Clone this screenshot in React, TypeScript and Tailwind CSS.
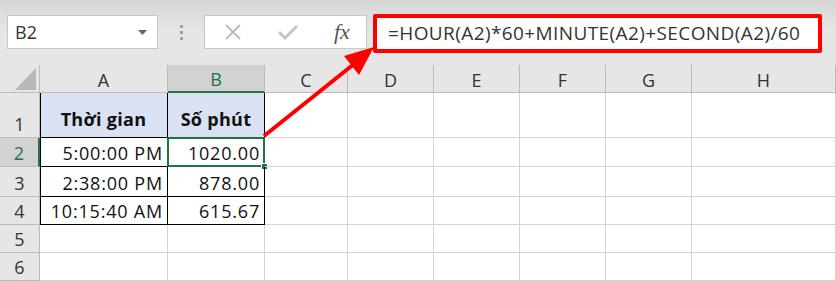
import React from "react";

const cols = [
  { key: "A", w: "w-[128px]" },
  { key: "B", w: "w-[97px]" },
  { key: "C", w: "w-[83px]" },
  { key: "D", w: "w-[86px]" },
  { key: "E", w: "w-[86px]" },
  { key: "F", w: "w-[86px]" },
  { key: "G", w: "w-[86px]" },
  { key: "H", w: "w-[144px]" },
];

const rowHeights = ["h-[45px]", "h-[29px]", "h-[30px]", "h-[28px]", "h-[28px]", "h-[28px]"];

const data: Record<string, string> = {
  A1: "Thời gian",
  B1: "Số phút",
  A2: "5:00:00 PM",
  B2: "1020.00",
  A3: "2:38:00 PM",
  B3: "878.00",
  A4: "10:15:40 AM",
  B4: "615.67",
};

function Cell({ col, row, w }: { col: string; row: number; w: string }) {
  const id = col + row;
  const inTable = (col === "A" || col === "B") && row <= 4;
  const header = inTable && row === 1;
  const text = data[id];
  let cls = `${w} shrink-0 h-full relative flex items-end box-border border-r border-b `;
  if (inTable) {
    cls += "border-black ";
    if (col === "A") cls += "shadow-[inset_1px_0_0_#000] ";
  } else {
    cls += "border-[#d4d4d4] ";
  }
  if (header) cls += "bg-[#d9e1f2] justify-center font-bold pb-[7px] ";
  else cls += "justify-end pr-[4px] pb-[2px] ";
  return (
    <div className={cls}>
      {text && (
        <span
          className={`text-[18px] leading-[22px] text-[#111] ${header ? "tracking-[0.3px]" : "tracking-[0.8px]"}`}
        >
          {text}
        </span>
      )}
      {id === "B2" && (
        <>
          <div className="absolute -left-[1px] -top-[1px] -right-[1px] -bottom-[1px] border-2 border-[#217346] pointer-events-none" />
          <div className="absolute -right-[4px] -bottom-[4px] w-[7px] h-[7px] bg-[#217346] border border-white" />
        </>
      )}
    </div>
  );
}

export default function App() {
  return (
    <div className="w-[836px] h-[281px] bg-[#e6e6e6] relative overflow-hidden font-['Open_Sans',sans-serif] text-[#333]">
      {/* Formula bar */}
      <div className="h-[65px] bg-gradient-to-b from-[#d6d6d6] via-[#e6e6e6] to-[#e6e6e6] flex items-start pt-[14px]">
        <div className="ml-[7px] mt-[1px] w-[151px] h-[34px] bg-white border border-[#c6c6c6] flex items-center justify-between pl-[7px] pr-[10px]">
          <span className="text-[18px] text-[#333]">B2</span>
          <svg width="9" height="5" viewBox="0 0 9 5">
            <path d="M0 0 L9 0 L4.5 5 Z" fill="#666" />
          </svg>
        </div>
        <div className="w-[46px] h-[34px] mt-[1px] flex flex-col items-center justify-center gap-[3px]">
          <div className="w-[3px] h-[3px] bg-[#a0a0a0]" />
          <div className="w-[3px] h-[3px] bg-[#a0a0a0]" />
          <div className="w-[3px] h-[3px] bg-[#a0a0a0]" />
        </div>
        <div className="w-[163px] h-[34px] mt-[1px] bg-white border border-[#c6c6c6] flex items-center">
          <svg width="18" height="18" viewBox="0 0 18 18" className="ml-[19px]">
            <path d="M2 2 L16 16 M16 2 L2 16" stroke="#bdbdbd" strokeWidth="2" />
          </svg>
          <svg width="20" height="16" viewBox="0 0 20 16" className="ml-[36px]">
            <path d="M1 8 L7 14 L19 2" stroke="#c4c4c4" strokeWidth="3" fill="none" />
          </svg>
          <span className="ml-[36px] text-[22px] italic font-['Liberation_Serif',serif] text-[#555] leading-none">fx</span>
        </div>
        <div className="ml-[6px] w-[449px] h-[39px] bg-white border-[4px] border-[#ff0000] rounded-[2px] flex items-center pl-[11px]">
          <span className="text-[19px] text-[#333] tracking-[0.4px]">=HOUR(A2)*60+MINUTE(A2)+SECOND(A2)/60</span>
        </div>
      </div>

      {/* Grid */}
      <div className="flex flex-col">
        <div className="flex h-[28px]">
          <div className="w-[40px] shrink-0 h-full relative border-r border-b border-[#bcbcbc] box-border">
            <svg width="21" height="22" viewBox="0 0 21 22" className="absolute left-[15px] top-[3px]">
              <path d="M21 0 L21 22 L0 22 Z" fill="#b8b8b8" />
            </svg>
          </div>
          {cols.map((c) => (
            <div
              key={c.key}
              className={`${c.w} shrink-0 h-full box-border flex items-center justify-center pt-[3px] text-[18px] ${
                c.key === "B"
                  ? "bg-[#d2d2d2] text-[#217346] border-r border-[#bcbcbc] border-b-2 border-b-[#217346]"
                  : "border-r border-b border-[#bcbcbc]"
              }`}
            >
              {c.key}
            </div>
          ))}
        </div>
        {rowHeights.map((h, i) => {
          const row = i + 1;
          return (
            <div key={row} className={`flex ${h}`}>
              <div
                className={`w-[40px] shrink-0 h-full box-border flex items-end justify-center pb-[1px] text-[18px] leading-[24px] ${
                  row === 2
                    ? "bg-[#d2d2d2] text-[#217346] border-r-2 border-r-[#217346] border-b border-b-[#bcbcbc]"
                    : "border-r border-b border-[#bcbcbc]"
                }`}
              >
                {row}
              </div>
              <div className="flex flex-1 bg-white">
                {cols.map((c) => (
                  <Cell key={c.key} col={c.key} row={row} w={c.w} />
                ))}
              </div>
            </div>
          );
        })}
      </div>

      {/* Arrow overlay */}
      <svg className="absolute left-0 top-0 pointer-events-none" width="836" height="281" viewBox="0 0 836 281">
        <line x1="264" y1="136" x2="354" y2="64" stroke="#ff0000" strokeWidth="4" />
        <polygon points="374,47 344,56 359,75" fill="#ff0000" />
      </svg>
    </div>
  );
}
